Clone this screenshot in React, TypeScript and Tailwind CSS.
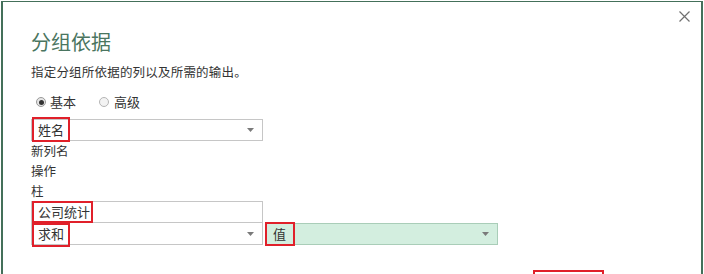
const font = { fontFamily: '"Noto Sans CJK SC", "Noto Sans", sans-serif' };

const Arrow = () => (
  <svg width="7" height="4" viewBox="0 0 7 4" className="shrink-0">
    <path d="M0 0h7L3.5 4z" fill="#7a7a7a" />
  </svg>
);

// red annotation box drawn over a field's text
const Mark = ({ className }: { className: string }) => (
  <span className={`absolute border-2 border-[#e0202a] ${className}`} />
);

export default function App() {
  return (
    <div className="w-[704px] h-[274px] overflow-hidden bg-white" style={font}>
      <div className="relative ml-[1px] mt-[1px] w-[702px] h-[280px] border-l-2 border-t border-r-2 border-[#44705a] bg-white pl-[28px] text-[12.5px] text-[#333]">
        {/* close */}
        <svg width="11" height="11" viewBox="0 0 11 11" className="absolute right-[11px] top-[9px]">
          <path d="M0.5 0.5l10 10M10.5 0.5l-10 10" stroke="#707070" strokeWidth="1.2" />
        </svg>

        <h1 className="pt-[26px] text-[20px] leading-[28px] text-[#4a7560]">分组依据</h1>
        <p className="mt-[7px] leading-[18px] tracking-[0.2px]">指定分组所依据的列以及所需的输出。</p>

        {/* radios */}
        <div className="mt-[12px] flex items-center h-[18px] text-[13px]">
          <span className="ml-[5px] w-[10px] h-[10px] rounded-full border border-[#9a9a9a] bg-[#e6e6e6] flex items-center justify-center">
            <span className="w-[5px] h-[5px] rounded-full bg-[#333]" />
          </span>
          <span className="ml-[4px]">基本</span>
          <span className="ml-[23px] w-[10px] h-[10px] rounded-full border border-[#b5b5b5] bg-[#f3f3f3]" />
          <span className="ml-[5px]">高级</span>
        </div>

        {/* group by */}
        <div className="relative mt-[8px] w-[232px] h-[22px] border border-[#c6c6c6] pl-[6px] pr-[8px] flex items-center justify-between text-[13px]">
          <span>姓名</span>
          <Arrow />
          <Mark className="left-[0px] top-[-3px] w-[38px] h-[25px]" />
        </div>

        <div className="leading-[20px]">新列名</div>
        <div className="leading-[20px]">操作</div>
        <div className="leading-[20px]">柱</div>

        <div className="relative w-[232px] h-[22px] border border-[#c6c6c6] pl-[6px] flex items-center text-[13px]">
          <span>公司统计</span>
          <Mark className="left-[0px] top-[-1px] w-[61px] h-[22px]" />
        </div>

        <div className="flex gap-[3px]">
          <div className="relative w-[232px] h-[22px] border border-[#c6c6c6] border-t-0 pl-[6px] pr-[8px] flex items-center justify-between text-[13px]">
            <span>求和</span>
            <Arrow />
            <Mark className="left-[0px] top-[0px] w-[38px] h-[24px]" />
          </div>
          <div className="relative w-[232px] h-[22px] border border-[#a9cdb8] bg-[#d3eedf] pl-[6px] pr-[8px] flex items-center justify-between text-[13px]">
            <span>值</span>
            <Arrow />
            <Mark className="left-[-2px] top-[-2px] w-[30px] h-[24px]" />
          </div>
        </div>

        {/* bottom button marker */}
        <span className="absolute left-[530px] top-[268px] w-[71px] h-[20px] border-2 border-[#e0202a]" />
      </div>
    </div>
  );
}
